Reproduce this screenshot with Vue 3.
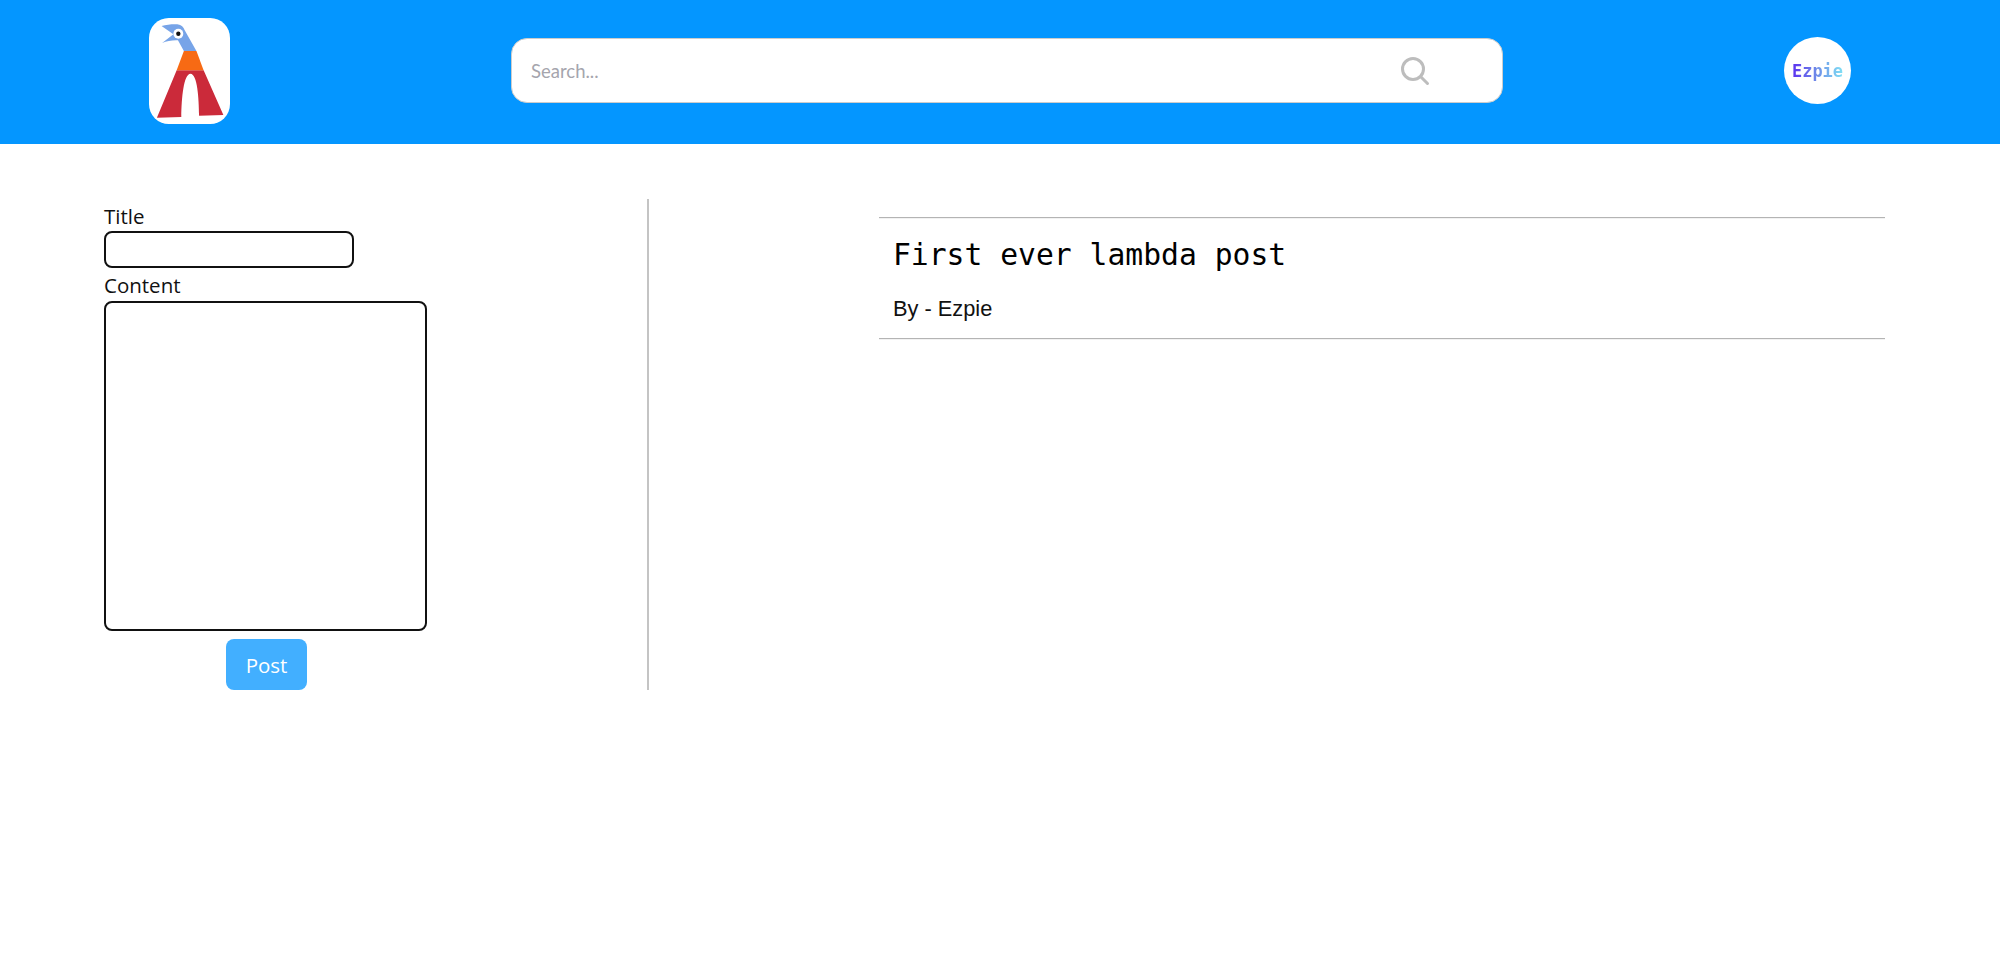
<script setup>
import { ref } from "vue";

const title = ref("");
const content = ref("");
const posts = ref([{ id: 1, title: "First ever lambda post", author: "Ezpie" }]);
</script>

<template>
  <header class="navbar">
    <a class="logo">
      <svg viewBox="0 0 82 106" width="81" height="106" preserveAspectRatio="none">
        <rect width="82" height="106" rx="20" fill="#fff" />
        <path d="M8 99.7 28 52.3H55.3L75.3 97 50.7 97.7C50.5 80 49 56 42 55.7 35 56 33 80 32.7 99Z" fill="#cb2a3a" />
        <path d="M28 52.3 35.3 33H48L55.3 52.3Z" fill="#f76a14" />
        <path d="M12.7 8C18 6.5 24 6 28.7 6.3 33 7 35 9 36 12L48 33H35.3L29.3 22.3C24 22 18 23 13.3 25L24.7 16.3Z" fill="#77a4e8" />
        <circle cx="29.7" cy="15.7" r="5" fill="#fff" />
        <circle cx="29.7" cy="15.7" r="2.2" fill="#111" />
      </svg>
    </a>
    <div class="search">
      <input type="text" placeholder="Search..." class="search-input" />
      <svg class="search-icon" viewBox="0 0 30 30" width="30" height="30" fill="none" stroke="#bdbdbd" stroke-width="3" stroke-linecap="round">
        <circle cx="13" cy="13" r="10.5" />
        <path d="M21 21 27.5 27.5" />
      </svg>
    </div>
    <div class="avatar"><span class="avatar-text">Ezpie</span></div>
  </header>

  <main class="page">
    <form class="post-form" @submit.prevent>
      <label for="title" class="label">Title</label>
      <input id="title" v-model="title" type="text" class="title-input" />
      <label for="content" class="label">Content</label>
      <textarea id="content" v-model="content" class="content-input"></textarea>
      <button type="submit" class="post-button">Post</button>
    </form>

    <section class="post-list">
      <article v-for="post in posts" :key="post.id" class="post">
        <h2 class="post-title">{{ post.title }}</h2>
        <p class="post-author">By - {{ post.author }}</p>
      </article>
    </section>
  </main>
</template>

<style>
html,
body {
  background: #fff;
}
</style>

<style scoped>
.navbar {
  display: flex;
  align-items: center;
  box-sizing: border-box;
  height: 144px;
  padding-bottom: 3px;
  padding-left: 149px;
  background: #0496ff;
}

.logo {
  display: flex;
  flex: none;
}

.search {
  display: flex;
  align-items: center;
  box-sizing: border-box;
  width: 992px;
  height: 65px;
  margin-left: 281px;
  padding-left: 19px;
  background: #fff;
  border: 1px solid #ccc;
  border-radius: 16px;
}

.search-input {
  flex: 1;
  min-width: 0;
  padding: 0;
  border: none;
  outline: none;
  background: transparent;
  font-family: Lato, sans-serif;
  font-size: 18.5px;
}

.search-input::placeholder {
  color: #a5a5ad;
}

.search-icon {
  flex: none;
  margin-right: 72px;
  margin-left: 20px;
}

.avatar {
  display: flex;
  align-items: center;
  justify-content: center;
  flex: none;
  width: 67px;
  height: 67px;
  margin-left: 281px;
  background: #fff;
  border-radius: 50%;
}

.avatar-text {
  font-family: "DejaVu Sans Mono", monospace;
  font-size: 17px;
  font-weight: 700;
  background: linear-gradient(90deg, #5a2ff0 0%, #6f8fe8 50%, #7fe0f5 100%);
  -webkit-background-clip: text;
  background-clip: text;
  color: transparent;
}

.page {
  display: flex;
  align-items: flex-start;
  padding-top: 55px;
}

.post-form {
  display: flex;
  flex-direction: column;
  align-items: flex-start;
  box-sizing: border-box;
  width: 649px;
  height: 491px;
  padding-top: 1px;
  padding-left: 104px;
  border-right: 2px solid #c4c4c4;
  font-family: "Open Sans", sans-serif;
}

.label {
  font-size: 20.5px;
  line-height: 32px;
  color: #111;
}

.title-input,
.content-input {
  box-sizing: border-box;
  margin: 0;
  padding: 0;
  border: 2.5px solid #111;
  outline: none;
  background: #fff;
  resize: none;
}

.title-input {
  width: 250px;
  height: 37px;
  margin-top: -1px;
  margin-bottom: 1px;
  border-radius: 8px;
}

.content-input {
  display: block;
  width: 323px;
  height: 330px;
  border-radius: 8px;
}

.post-button {
  align-self: flex-start;
  width: 81px;
  height: 51px;
  margin: 8px 0 0 122px;
  padding: 0;
  border: none;
  border-radius: 8px;
  background: #42afff;
  color: #fff;
  font-family: "Open Sans", sans-serif;
  font-size: 20.5px;
}

.post-list {
  width: 1006px;
  margin-left: 230px;
  padding-top: 18px;
}

.post {
  box-sizing: border-box;
  height: 122px;
  padding: 0 14px;
  border-top: 1px solid #b4b4b4;
  border-bottom: 1px solid #b4b4b4;
  box-shadow: 0 1px 0 #f2f2f2, inset 0 1px 0 #f2f2f2;
}

.post-title {
  margin: 17px 0 0;
  font-family: "DejaVu Sans Mono", monospace;
  font-size: 29.7px;
  font-weight: 400;
  line-height: 40px;
  color: #000;
}

.post-author {
  margin: 20px 0 0;
  font-family: "Liberation Sans", sans-serif;
  font-size: 21.8px;
  line-height: 28px;
  color: #111;
}
</style>
